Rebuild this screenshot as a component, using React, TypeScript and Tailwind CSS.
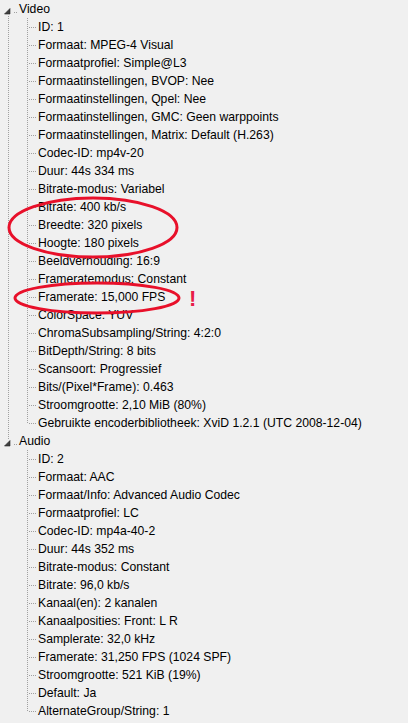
import React from "react";

const video = [
  "ID: 1",
  "Formaat: MPEG-4 Visual",
  "Formaatprofiel: Simple@L3",
  "Formaatinstellingen, BVOP: Nee",
  "Formaatinstellingen, Qpel: Nee",
  "Formaatinstellingen, GMC: Geen warppoints",
  "Formaatinstellingen, Matrix: Default (H.263)",
  "Codec-ID: mp4v-20",
  "Duur: 44s 334 ms",
  "Bitrate-modus: Variabel",
  "Bitrate: 400 kb/s",
  "Breedte: 320 pixels",
  "Hoogte: 180 pixels",
  "Beeldverhouding: 16:9",
  "Frameratemodus: Constant",
  "Framerate: 15,000 FPS",
  "ColorSpace: YUV",
  "ChromaSubsampling/String: 4:2:0",
  "BitDepth/String: 8 bits",
  "Scansoort: Progressief",
  "Bits/(Pixel*Frame): 0.463",
  "Stroomgrootte: 2,10 MiB (80%)",
  "Gebruikte encoderbibliotheek: XviD 1.2.1 (UTC 2008-12-04)",
];

const audio = [
  "ID: 2",
  "Formaat: AAC",
  "Formaat/Info: Advanced Audio Codec",
  "Formaatprofiel: LC",
  "Codec-ID: mp4a-40-2",
  "Duur: 44s 352 ms",
  "Bitrate-modus: Constant",
  "Bitrate: 96,0 kb/s",
  "Kanaal(en): 2 kanalen",
  "Kanaalposities: Front: L R",
  "Samplerate: 32,0 kHz",
  "Framerate: 31,250 FPS (1024 SPF)",
  "Stroomgrootte: 521 KiB (19%)",
  "Default: Ja",
  "AlternateGroup/String: 1",
];

const LINE = "#a0a0a0";

function ParentRow({ label, hasNext, hasPrev }: { label: string; hasNext: boolean; hasPrev: boolean }) {
  return (
    <div className="flex h-[18px] items-center">
      <svg width="19" height="18" className="shrink-0">
        {hasPrev && <line x1="8.5" y1="0" x2="8.5" y2="8" stroke={LINE} strokeDasharray="1 1" />}
        {hasNext && <line x1="8.5" y1="16" x2="8.5" y2="18" stroke={LINE} strokeDasharray="1 1" />}
        <line x1="14" y1="12.5" x2="17" y2="12.5" stroke={LINE} strokeDasharray="1 1" />
        <polygon points="10,8.5 10,14 4.5,14" fill="#404040" stroke="#262626" strokeWidth="0.6" />
      </svg>
      <span className="whitespace-nowrap">{label}</span>
    </div>
  );
}

function ChildRow({ label, last, parentLine }: { label: string; last: boolean; parentLine: boolean }) {
  return (
    <div className="flex h-[18px] items-center">
      <svg width="38" height="18" className="shrink-0">
        {parentLine && <line x1="8.5" y1="0" x2="8.5" y2="18" stroke={LINE} strokeDasharray="1 1" />}
        <line x1="27.5" y1="0" x2="27.5" y2={last ? 10 : 18} stroke={LINE} strokeDasharray="1 1" />
        <line x1="29" y1="9.5" x2="37" y2="9.5" stroke={LINE} strokeDasharray="1 1" />
      </svg>
      <span className="whitespace-nowrap">{label}</span>
    </div>
  );
}

export default function App() {
  return (
    <div
      className="relative w-[408px] h-[723px] overflow-hidden bg-[#f0f0f0] text-[12.2px] text-black"
      style={{ fontFamily: '"Liberation Sans", Arial, sans-serif' }}
    >
      <div className="flex flex-col">
        <ParentRow label="Video" hasNext={true} hasPrev={false} />
        {video.map((t, i) => (
          <ChildRow key={"v" + i} label={t} last={i === video.length - 1} parentLine={true} />
        ))}
        <ParentRow label="Audio" hasNext={false} hasPrev={true} />
        {audio.map((t, i) => (
          <ChildRow key={"a" + i} label={t} last={i === audio.length - 1} parentLine={false} />
        ))}
      </div>

      <svg className="pointer-events-none absolute left-0 top-0" width="408" height="723">
        <ellipse cx="93" cy="227.5" rx="84" ry="29.5" fill="none" stroke="#e8102a" strokeWidth="3" />
        <ellipse cx="97" cy="298" rx="82" ry="15" fill="none" stroke="#e8102a" strokeWidth="3" />
      </svg>
      <div className="absolute left-[189px] top-[288px] text-[#e81c48] text-[22px] font-bold leading-[22px]">
        !
      </div>
    </div>
  );
}
